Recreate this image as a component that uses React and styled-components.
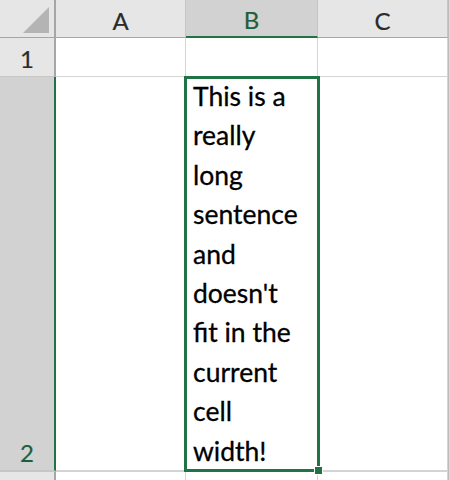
import React from "react";
import styled, { createGlobalStyle, css } from "styled-components";

const Global = createGlobalStyle`
  html, body { margin: 0; padding: 0; background: #ffffff; }
  body { width: 450px; height: 480px; overflow: hidden; font-family: "Lato", "Open Sans", sans-serif; }
`;

const Sheet = styled.div`
  position: relative;
  display: grid;
  grid-template-columns: 56px 130px 132px 130px 2px;
  grid-template-rows: 38px 39px 394px 9px;
  width: 450px;
  height: 480px;
  overflow: hidden;
  background: #ffffff;
`;

const Corner = styled.div`
  box-sizing: border-box;
  position: relative;
  background: #e6e6e6;
  border-right: 2px solid #a6a6a6;
  border-bottom: 1px solid #a6a6a6;
`;

const CornerTriangle = styled.div`
  position: absolute;
  right: 5px;
  bottom: 4px;
  width: 0;
  height: 0;
  border-left: 26px solid transparent;
  border-bottom: 26px solid #b4b4b4;
`;

const headerText = css`
  font-size: 24px;
  color: #2b2b2b;
  -webkit-text-stroke: 0.2px currentColor;
`;

const ColHeader = styled.div`
  box-sizing: border-box;
  display: flex;
  align-items: center;
  justify-content: center;
  padding-top: 3px;
  ${headerText}
  background: #e6e6e6;
  border-right: 1px solid #c6c6c6;
  border-bottom: 1px solid #a6a6a6;
  ${(p) =>
    p.$selected &&
    css`
      background: #d2d2d2;
      color: #1f5f3d;
      border-bottom: 2px solid #217346;
    `}
`;

const RowHeader = styled.div`
  box-sizing: border-box;
  display: flex;
  align-items: flex-end;
  justify-content: center;
  padding-bottom: 3px;
  ${headerText}
  background: #e6e6e6;
  border-right: 2px solid #a6a6a6;
  border-bottom: 1px solid #c6c6c6;
  ${(p) =>
    p.$selected &&
    css`
      background: #d2d2d2;
      color: #1f5f3d;
      border-right: 2px solid #217346;
    `}
  ${(p) =>
    p.$last &&
    css`
      border-top: 1px solid #c6c6c6;
      border-bottom: none;
    `}
`;

const Cell = styled.div`
  box-sizing: border-box;
  background: #ffffff;
  border-right: 1px solid #d4d4d4;
  border-bottom: 1px solid #d4d4d4;
  ${(p) =>
    p.$last &&
    css`
      border-top: 1px solid #d4d4d4;
      border-bottom: none;
    `}
`;

const TextCell = styled(Cell)`
  padding-left: 7px;
  font-size: 26.5px;
  line-height: 39.4px;
  color: #000000;
  -webkit-text-stroke: 0.3px #000000;
  overflow: hidden;
  white-space: nowrap;
`;

const Edge = styled.div`
  background: #dcdcdc;
  border-left: 1px solid #bdbdbd;
`;

const Selection = styled.div`
  position: absolute;
  left: 184px;
  top: 76px;
  width: 136px;
  height: 396px;
  box-sizing: border-box;
  border: 3px solid #217346;
  pointer-events: none;
`;

const Handle = styled.div`
  position: absolute;
  right: -6px;
  bottom: -6px;
  width: 7px;
  height: 7px;
  background: #217346;
  border: 1px solid #ffffff;
`;

const lines = [
  "This is a",
  "really",
  "long",
  "sentence",
  "and",
  "doesn't",
  "fit in the",
  "current",
  "cell",
  "width!",
];

export default function App() {
  return (
    <>
      <Global />
      <Sheet>
        <Corner>
          <CornerTriangle />
        </Corner>
        <ColHeader>A</ColHeader>
        <ColHeader $selected>B</ColHeader>
        <ColHeader>C</ColHeader>
        <Edge />

        <RowHeader>1</RowHeader>
        <Cell />
        <Cell />
        <Cell />
        <Edge />

        <RowHeader $selected>2</RowHeader>
        <Cell />
        <TextCell>
          {lines.map((l) => (
            <div key={l}>{l}</div>
          ))}
        </TextCell>
        <Cell />
        <Edge />

        <RowHeader $last />
        <Cell $last />
        <Cell $last />
        <Cell $last />
        <Edge />

        <Selection>
          <Handle />
        </Selection>
      </Sheet>
    </>
  );
}
